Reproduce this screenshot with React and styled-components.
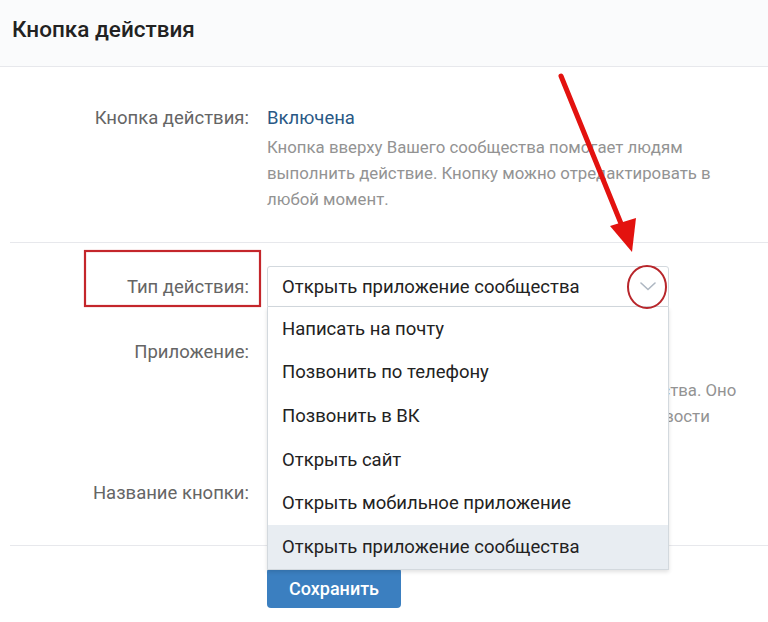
import React from "react";
import styled, { createGlobalStyle } from "styled-components";

const GlobalStyle = createGlobalStyle`
  html, body {
    margin: 0;
    padding: 0;
    background: #fff;
  }
  body {
    font-family: Roboto, "Liberation Sans", Arial, sans-serif;
    -webkit-font-smoothing: antialiased;
  }
`;

const Page = styled.div`
  position: relative;
  width: 768px;
  height: 622px;
  overflow: hidden;
  background: #fff;
`;

const Header = styled.div`
  height: 67px;
  box-sizing: border-box;
  display: flex;
  align-items: center;
  padding: 0 0 8px 12px;
  background: #fafbfc;
  border-bottom: 1px solid #e7e8ec;
  font-size: 22.5px;
  font-weight: 500;
  color: #222;
`;

const Section = styled.div`
  padding: ${({ top }) => top || 0}px 20px 0 0;
`;

const Row = styled.div`
  display: grid;
  grid-template-columns: 249px 1fr;
  column-gap: 18px;
  align-items: ${({ start }) => (start ? "start" : "center")};
  margin-top: ${({ mt }) => mt || 0}px;
`;

const Label = styled.div`
  text-align: right;
  font-size: 18.5px;
  line-height: 22px;
  color: #656565;
  white-space: nowrap;
`;

const Value = styled.div`
  font-size: 18.5px;
  line-height: 22px;
  color: #2a5885;
`;

const Desc = styled.div`
  grid-column: 2;
  font-size: 16.8px;
  line-height: 26px;
  color: #939393;
  margin-top: ${({ mt }) => mt || 0}px;
  white-space: ${({ nowrap }) => (nowrap ? "nowrap" : "normal")};
`;

const Divider = styled.div`
  height: 1px;
  background: #e7e8ec;
  margin: ${({ mt }) => mt || 0}px 0 0 10px;
`;

const SelectWrap = styled.div`
  position: relative;
  width: 402px;
`;

const Select = styled.div`
  height: 41px;
  box-sizing: border-box;
  border: 1px solid #d3d9de;
  border-radius: 3px 3px 0 0;
  display: flex;
  align-items: center;
  justify-content: space-between;
  padding: 0 12px 0 14px;
  font-size: 18.5px;
  color: #222;
  background: #fff;
`;

const Input = styled.div`
  height: 41px;
  width: 402px;
  box-sizing: border-box;
  border: 1px solid #d3d9de;
  border-radius: 3px;
`;

const Menu = styled.div`
  position: absolute;
  left: 0;
  right: 0;
  top: 41px;
  z-index: 2;
  background: #fff;
  border: 1px solid #d3d9de;
  border-top: none;
  box-shadow: 0 2px 4px rgba(0, 0, 0, 0.12);
  display: flex;
  flex-direction: column;
`;

const Item = styled.div`
  height: 43.6px;
  display: flex;
  align-items: center;
  padding-left: 14px;
  font-size: 18.5px;
  color: #222;
  background: ${({ active }) => (active ? "#e8edf2" : "#fff")};
`;

const Button = styled.button`
  width: 134px;
  height: 40px;
  border: none;
  border-radius: 4px;
  background: #3b7fc0;
  color: #fff;
  font-family: inherit;
  font-size: 18px;
  font-weight: 500;
  padding: 0;
`;

const Annotation = styled.svg`
  position: absolute;
  left: 0;
  top: 0;
  z-index: 5;
  pointer-events: none;
`;

const Chevron = () => (
  <svg width="16" height="9" viewBox="0 0 16 9">
    <path d="M1 1l7 6.5L15 1" fill="none" stroke="#aeb7c2" strokeWidth="1.6" strokeLinecap="round" />
  </svg>
);

const options = [
  "Написать на почту",
  "Позвонить по телефону",
  "Позвонить в ВК",
  "Открыть сайт",
  "Открыть мобильное приложение",
  "Открыть приложение сообщества",
];

export default function App() {
  return (
    <Page>
      <GlobalStyle />
      <Header>Кнопка действия</Header>

      <Section top={40}>
        <Row start>
          <Label>Кнопка действия:</Label>
          <Value>Включена</Value>
          <Desc mt={5}>
            Кнопка вверху Вашего сообщества помогает людям выполнить действие. Кнопку можно отредактировать в любой момент.
          </Desc>
        </Row>
      </Section>

      <Divider mt={30} />

      <Section top={23}>
        <Row>
          <Label>Тип действия:</Label>
          <SelectWrap>
            <Select>
              <span>Открыть приложение сообщества</span>
              <Chevron />
            </Select>
            <Menu>
              {options.map((o, i) => (
                <Item key={o} active={i === options.length - 1}>{o}</Item>
              ))}
            </Menu>
          </SelectWrap>
        </Row>
        <Row mt={24}>
          <Label>Приложение:</Label>
          <Input />
          <Desc mt={5} nowrap>
            Укажите одно из приложений для Вашего сообщества. Оно
            <br />
            будет открыто по нажатию на кнопку из шапки новости
          </Desc>
        </Row>
        <Row mt={43}>
          <Label>Название кнопки:</Label>
          <Input />
        </Row>
      </Section>

      <Divider mt={32} />

      <Section top={22}>
        <Row>
          <span />
          <Button>Сохранить</Button>
        </Row>
      </Section>

      <Annotation width="768" height="622" viewBox="0 0 768 622">
        <rect x="85" y="251" width="175" height="55" fill="none" stroke="#c4262b" strokeWidth="2.2" />
        <ellipse cx="647" cy="287" rx="19" ry="21" fill="none" stroke="#b8262b" strokeWidth="2" />
        <line x1="561" y1="76" x2="622" y2="226" stroke="#e3120f" strokeWidth="5" strokeLinecap="round" />
        <polygon points="610,226 636,218 632,252" fill="#e3120f" />
      </Annotation>
    </Page>
  );
}
